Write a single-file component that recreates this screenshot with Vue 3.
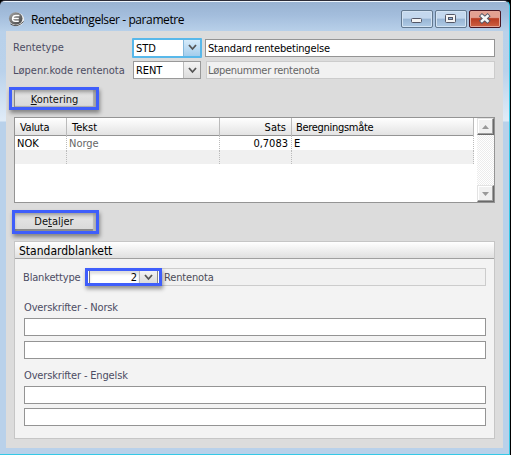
<script setup>
import { ref } from 'vue'

const name = ref('Standard rentebetingelse')
const rows = [
  { valuta: 'NOK', tekst: 'Norge', sats: '0,7083', metode: 'E' },
  { valuta: '', tekst: '', sats: '', metode: '' },
]
</script>

<template>
  <div class="window">
    <header class="titlebar">
      <svg class="logo" width="17" height="17" viewBox="0 0 17 17">
        <defs>
          <linearGradient id="ball" x1="0" y1="0" x2="1" y2="1">
            <stop offset="0" stop-color="#aaa" />
            <stop offset=".45" stop-color="#747474" />
            <stop offset="1" stop-color="#444" />
          </linearGradient>
        </defs>
        <ellipse cx="8.6" cy="8.3" rx="7.4" ry="6.9" fill="#f2f2f2" />
        <path d="M2.5 13Q9 17.5 15.6 10.5" fill="none" stroke="#555" stroke-width="1" />
        <ellipse cx="7.7" cy="7.5" rx="6.8" ry="6.2" fill="url(#ball)" />
        <path d="M11.4 4.6H8Q5 4.6 4.6 7.4T7.2 10.2H10.8M5 7.4H10.8" fill="none" stroke="#fff" stroke-width="1.5" />
      </svg>
      <h1>Rentebetingelser - parametre</h1>
      <div class="controls">
        <button class="ctl" aria-label="Minimer">
          <svg width="30" height="16" viewBox="0 0 30 16"><rect x="9.5" y="7.5" width="10" height="4" rx="1" fill="#f4f4f4" stroke="#535666" /></svg>
        </button>
        <button class="ctl" aria-label="Maksimer">
          <svg width="30" height="16" viewBox="0 0 30 16"><rect x="9.5" y="3.5" width="10" height="8" rx="1" fill="#f4f4f4" stroke="#535666" /><rect x="12.5" y="6.5" width="4" height="2" fill="#8fb2d8" stroke="#535666" /></svg>
        </button>
        <button class="ctl close" aria-label="Lukk">
          <svg width="30" height="16" viewBox="0 0 30 16"><path d="M12 5L17.5 10M17.5 5L12 10" stroke="#535666" stroke-width="4.4" stroke-linecap="square" /><path d="M12 5L17.5 10M17.5 5L12 10" stroke="#f6f6f6" stroke-width="2.6" stroke-linecap="square" /></svg>
        </button>
      </div>
    </header>

    <main class="client">
      <div class="line">
        <label class="caption">Rentetype</label>
        <div class="combo focused">
          <span class="value">STD</span>
          <span class="arrow"><svg width="9" height="7" viewBox="0 0 9 7"><path d="M1 1L4.5 5L8 1" /></svg></span>
        </div>
        <div class="field grow"><span class="t-name">{{ name }}</span></div>
      </div>
      <div class="line second">
        <label class="caption">Løpenr.kode rentenota</label>
        <div class="combo">
          <span class="value">RENT</span>
          <span class="arrow"><svg width="9" height="7" viewBox="0 0 9 7"><path d="M1 1L4.5 5L8 1" /></svg></span>
        </div>
        <div class="field grow readonly"><span class="t-num">Løpenummer rentenota</span></div>
      </div>

      <button class="action kontering"><span><u>K</u>ontering</span></button>

      <section class="grid">
        <div class="table">
          <div class="row head">
            <span>Valuta</span><span>Tekst</span><span class="num">Sats</span><span>Beregningsmåte</span>
          </div>
          <div v-for="(row, i) in rows" :key="i" class="row data">
            <span>{{ row.valuta }}</span><span class="muted">{{ row.tekst }}</span><span class="num">{{ row.sats }}</span><span>{{ row.metode }}</span>
          </div>
        </div>
        <div class="scroll">
          <span class="sbtn"><svg width="7" height="4" viewBox="0 0 7 4"><path d="M0 4L3.5 0L7 4Z" /></svg></span>
          <span class="track"></span>
          <span class="sbtn"><svg width="7" height="4" viewBox="0 0 7 4"><path d="M0 0L3.5 4L7 0Z" /></svg></span>
        </div>
      </section>

      <button class="action detaljer"><span>De<u>t</u>aljer</span></button>

      <section class="group">
        <h2><span>Standardblankett</span></h2>
        <div class="body">
          <div class="line blank">
            <label>Blankettype</label>
            <div class="combo marked">
              <span class="value">2</span>
              <span class="arrow"><svg width="9" height="7" viewBox="0 0 9 7"><path d="M1 1L4.5 5L8 1" /></svg></span>
            </div>
            <div class="field grow flat"><span>Rentenota</span></div>
          </div>
          <div class="heading">Overskrifter - Norsk</div>
          <div class="field"></div>
          <div class="field gap5"></div>
          <div class="heading low">Overskrifter - Engelsk</div>
          <div class="field"></div>
          <div class="field gap4"></div>
        </div>
      </section>
    </main>
  </div>
</template>

<style>
body { margin: 0; background: #000; overflow: hidden; }
</style>

<style scoped>
* { box-sizing: border-box; }
.window {
  width: 510px; height: 455px; padding: 0 6px 6px;
  border-top: 1px solid #2c2c38; border-right: 1px solid #35c8e6; border-bottom: 1px solid #35c8e6;
  border-radius: 5px 6px 0 0;
  background: linear-gradient(#eef5fc 0 1px, #99b3d2 1px, #a3bddc 14px, #b9d1ea 31px, #bad2eb 70px, #dfebf7 118px, #dfebf7 120px, #b9d1ea 121px);
  font: 11px/14px "DejaVu Sans Condensed", "DejaVu Sans", sans-serif;
  font-stretch: condensed;
  color: #000; white-space: nowrap;
}
.titlebar { height: 30px; display: flex; align-items: flex-start; padding-left: 2px; }
.logo { margin-top: 10px; }
h1 { margin: 10px 0 0 6px; font: 12px/18px "Open Sans", sans-serif; letter-spacing: -.4px; }
.controls { display: flex; gap: 2px; margin: 9px 2px 0 auto; }
.ctl {
  width: 32px; height: 18px; padding: 0; border: 1px solid #62788f; border-radius: 2px;
  background: linear-gradient(#c4d8ee 0 45%, #98b5d4 50%, #b0cbe6);
  box-shadow: inset 0 0 0 1px #d3e3f3;
}
.ctl svg { display: block; }
.close {
  border-color: #4a1622; box-shadow: inset 0 0 0 1px #e3a598;
  background: linear-gradient(#e3a091 0 40%, #b83b22 48%, #cd6143);
}
.client { width: 497px; height: 417px; padding: 7px 8px 9px 8px; background: #dcdcdc; }
.line { display: flex; align-items: center; height: 19px; color: #4c4c63; }
.caption { width: 118px; flex: none; padding-top: 1px; }
.client > .line { margin-left: -1px; }
.client > .line .field { margin-left: 4px; }
.second { margin-top: 4px; height: 18px; }
.second .combo { margin: 0 1px; }
.combo {
  display: flex; width: 68px; height: 18px; border: 1px solid #999; background: #fff; color: #000;
}
.client > .line .combo { margin-left: 2px; }
.client > .line .combo.focused { width: 70px; height: 20px; border: 2px solid #58b8ea; border-radius: 1px; margin-left: 1px; margin-right: -1px; }
.value { flex: 1; padding-left: 2px; line-height: 17px; letter-spacing: -.1px; }
.arrow { width: 17px; border-left: 1px solid #bbb; background: linear-gradient(#f4f4f4, #dcdcdc); display: grid; place-items: center; }
.focused .arrow { width: 17px; background: linear-gradient(#d6ebfa, #a4cdec); border-color: #84b8dc; }
.arrow path { fill: none; stroke: #555; stroke-width: 1.8; }
.field { height: 18px; border: 1px solid #949494; background: #fff; color: #000; padding-left: 2px; line-height: 17px; }
.grow { flex: 1; }
.t-name { letter-spacing: -.17px; }
.t-num { letter-spacing: -.3px; }
.readonly { background: #f1f1f1; border-color: #ccc; color: #666; }
.readonly { padding-left: 1px; }
.action {
  display: flex; justify-content: center; align-items: center; padding: 0;
  border: 3px solid #3f5efb; background: linear-gradient(#c9c9c9, #e2e2e2 35%, #d8d8d8);
  font: inherit; color: #111;
  box-shadow: 1px 3px 4px #0006, inset 2px 0 0 #ccc, inset 3px 0 0 #888, inset 0 2px 3px #0003, inset -3px -1px 1px #aaa;
}
.kontering { width: 90px; height: 23px; margin: 8px 0 0 -5px; padding: 2px 0 0 1px; }
.detaljer { width: 87px; height: 24px; margin: 7px 0 0 -2px; padding-right: 3px; box-shadow: 1px 3px 4px #0006, inset 0 2px 3px #0003, inset -3px 0 1px #bbb, inset 0 -3px 0 -1px #888; }
.grid { display: flex; justify-content: space-between; height: 86px; margin-top: 7px; border: 1px solid #949494; background: #fff; }
.table { width: 459px; }
.row { display: grid; grid-template-columns: 52px 153px 72px 182px; height: 14px; }
.row span { padding-left: 2px; border-right: 1px dotted #bbb; line-height: 15px; }
.row .num { text-align: right; padding-right: 3px; }
.head { height: 18px; background: linear-gradient(#fff, #e3e3e3); border-bottom: 1px solid #949494; letter-spacing: -.3px; }
.head span { padding-left: 5px; border-right: 1px solid #bbb; line-height: 19px; }
.head span:nth-child(2) { letter-spacing: 0; }
.head span:last-child { padding-left: 4px; letter-spacing: -.3px; }
.head .num { padding-right: 5px; letter-spacing: 0; }
.data:last-child { background: #f0f0f0; }
.muted { color: #666; }
.scroll { width: 17px; display: flex; flex-direction: column; }
.sbtn { height: 17px; background: #f0f0f0; border: 1px solid #e3e3e3; border-right: 1px solid #696969; border-bottom: 1px solid #696969; box-shadow: inset -1px -1px #a0a0a0, inset 1px 1px #fff; display: grid; place-items: center; }
.sbtn path { fill: #999; }
.track { flex: 1; background: repeating-conic-gradient(#fff 0 25%, #ececec 0 50%) 0 0 / 2px 2px; }
.group { height: 198px; margin-top: 7px; border: 1px solid #c6c6c6; background: #f3f3f3; }
h2 { margin: 0; height: 17px; padding-left: 4px; font: 12px/19px "DejaVu Sans Condensed", "DejaVu Sans", sans-serif; background: linear-gradient(#fff, #e0e0e0); border-bottom: 1px solid #a0a0a0; }
.body { padding: 9px 8px 0 9px; color: #4c4c63; letter-spacing: -.16px; }
.blank { height: 18px; }
.blank label { width: 62px; margin-left: -1px; padding-top: 1px; }
.marked { width: 77px; border: 3px solid #3f5efb; box-shadow: 1px 3px 4px #0006; z-index: 1; }
.marked .value { text-align: right; padding-right: 2px; line-height: 13px; border-left: 1px solid #777; box-shadow: inset 0 3px 3px #0002; margin-left: 1px; }
.marked .arrow { width: 19px; border-right: 1px solid #888; margin-right: 1px; }
.flat { background: #f1f1f1; border-color: #ccc; color: #4c4c58; border-left: 0; }
.heading { height: 32px; padding-top: 15px; }
.low { height: 27px; padding-top: 10px; }
.gap5 { margin-top: 5px; }
.gap4 { margin-top: 4px; }
</style>
